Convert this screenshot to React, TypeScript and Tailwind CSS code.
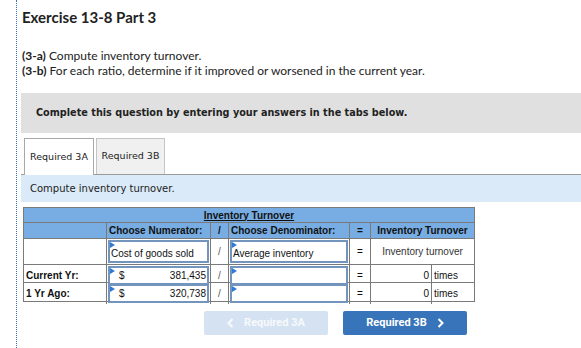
import React from "react";

const Tri = () => (
  <span className="absolute left-0 top-0 w-0 h-0 border-l-[5px] border-l-[#2f7ad6] border-y-[3px] border-y-transparent" />
);

const InputCell = ({ children, className = "" }: { children?: React.ReactNode; className?: string }) => (
  <div className={`relative h-full border-2 border-[#7395bd] bg-white flex items-center ${className}`}>
    <Tri />
    {children}
  </div>
);

export default function App() {
  const arial = { fontFamily: '"Liberation Sans", Arial, sans-serif' };
  return (
    <div className="w-[581px] h-[348px] bg-white overflow-hidden">
      <div className="ml-[16px] h-[348px] border-l border-dotted border-[#3b6fc0] pl-[4px]">
        <div
          className="pt-[8px] pl-[1px] text-[15px] font-bold leading-[18px] text-[#222]"
          style={{ fontFamily: 'Lato, "Open Sans", sans-serif' }}
        >
          Exercise 13-8 Part 3
        </div>
        <div
          className="mt-[22px] pl-[1px] text-[12px] leading-[15px] text-[#222]"
          style={{ fontFamily: 'Lato, "Open Sans", sans-serif' }}
        >
          <div>
            <span className="font-bold">(3-a)</span> Compute inventory turnover.
          </div>
          <div>
            <span className="font-bold">(3-b)</span> For each ratio, determine if it improved or worsened in the current year.
          </div>
        </div>
        <div
          className="mt-[15px] h-[40px] bg-[#e0e0e0] flex items-center pl-[15px] text-[9.7px] font-bold text-[#222]"
          style={{ fontFamily: '"DejaVu Sans", Verdana, sans-serif' }}
        >
          Complete this question by entering your answers in the tabs below.
        </div>
        <div
          className="mt-[5px] flex items-end border-b border-[#9a9a9a] pl-[3px] gap-[2px] h-[37px]"
          style={{ fontFamily: '"DejaVu Sans", Verdana, sans-serif' }}
        >
          <div className="w-[70px] h-[37px] -mb-px bg-white border border-b-0 border-[#a8a8a8] flex items-center justify-center text-[9.5px] text-[#222]">
            Required 3A
          </div>
          <div className="w-[69px] h-[36px] bg-[#f0f0f0] border border-b-0 border-[#c4c4c4] flex items-center justify-center text-[9.5px] text-[#222]">
            Required 3B
          </div>
        </div>
        <div
          className="h-[27px] bg-[#daeaf8] flex items-center pl-[9px] text-[10px] text-[#222]"
          style={{ fontFamily: '"DejaVu Sans", Verdana, sans-serif' }}
        >
          Compute inventory turnover.
        </div>
        <div className="mt-[5px] ml-[2px] w-[452px] text-[10px] text-[#111]" style={arial}>
          <div className="border border-[#7a7a7a]">
            <div className="h-[14px] bg-[#78ade3] flex items-center justify-center font-bold underline leading-none pt-[1px]">
              Inventory Turnover
            </div>
            <div className="grid grid-cols-[83px_104px_18px_121px_21px_1fr] h-[16px] bg-[#78ade3] border-t border-[#7a7a7a] font-bold">
              <div className="border-r border-[#7a7a7a]" />
              <div className="border-r border-[#7a7a7a] flex items-center pl-[2px]">Choose Numerator:</div>
              <div className="border-r border-[#7a7a7a] flex items-center justify-center">/</div>
              <div className="border-r border-[#7a7a7a] flex items-center pl-[2px]">Choose Denominator:</div>
              <div className="border-r border-[#7a7a7a] flex items-center justify-center">=</div>
              <div className="flex items-center justify-center">Inventory Turnover</div>
            </div>
            <div className="grid grid-cols-[83px_104px_18px_121px_21px_1fr] h-[26px] border-t border-[#7a7a7a]">
              <div className="border-r border-[#7a7a7a]" />
              <div className="border-r border-[#7a7a7a] p-[1px]">
                <InputCell className="pl-[1px] pt-[3px]">Cost of goods sold</InputCell>
              </div>
              <div className="border-r border-[#7a7a7a] flex items-center justify-center text-[#555]">/</div>
              <div className="border-r border-[#7a7a7a] p-[1px]">
                <InputCell className="pl-[1px] pt-[3px]">Average inventory</InputCell>
              </div>
              <div className="border-r border-[#7a7a7a] flex items-center justify-center">=</div>
              <div className="flex items-center justify-center text-[#333]">Inventory turnover</div>
            </div>
            {[
              ["Current Yr:", "381,435"],
              ["1 Yr Ago:", "320,738"],
            ].map(([label, val], i) => (
              <div
                key={label}
                className={`grid grid-cols-[83px_104px_18px_121px_21px_61px_1fr] ${i === 0 ? "h-[18px]" : "h-[19px]"} border-t border-[#7a7a7a]`}
              >
                <div className="border-r border-[#7a7a7a] flex items-center pl-[2px] font-bold">{label}</div>
                <div className="border-r border-[#7a7a7a] p-[1px]">
                  <InputCell className="justify-between px-[1px]">
                    <span className="pl-[8px]">$</span>
                    <span>{val}</span>
                  </InputCell>
                </div>
                <div className="border-r border-[#7a7a7a] flex items-center justify-center text-[#555]">/</div>
                <div className="border-r border-[#7a7a7a] p-[1px]">
                  <InputCell />
                </div>
                <div className="border-r border-[#7a7a7a] flex items-center justify-center">=</div>
                <div className="border-r border-[#7a7a7a] flex items-center justify-end pr-[2px]">0</div>
                <div className="flex items-center pl-[2px]">times</div>
              </div>
            ))}
          </div>
        </div>
        <div
          className="mt-[9px] flex gap-[15px] pl-[183px] text-[11px] font-bold text-white"
          style={{ fontFamily: 'Roboto, "Open Sans", sans-serif' }}
        >
          <div className="w-[124px] h-[24px] bg-[#d5e2f1] rounded-[2px] flex items-center justify-center gap-[10px] text-[#f7f9fc]">
            <svg width="7" height="10" viewBox="0 0 7 10">
              <path d="M5.5 1 L1.5 5 L5.5 9" stroke="currentColor" strokeWidth="2" fill="none" />
            </svg>
            <span>Required 3A</span>
          </div>
          <div className="w-[124px] h-[24px] bg-[#3874ba] rounded-[2px] flex items-center justify-center gap-[10px]">
            <span>Required 3B</span>
            <svg width="7" height="10" viewBox="0 0 7 10">
              <path d="M1.5 1 L5.5 5 L1.5 9" stroke="currentColor" strokeWidth="2" fill="none" />
            </svg>
          </div>
        </div>
      </div>
    </div>
  );
}
